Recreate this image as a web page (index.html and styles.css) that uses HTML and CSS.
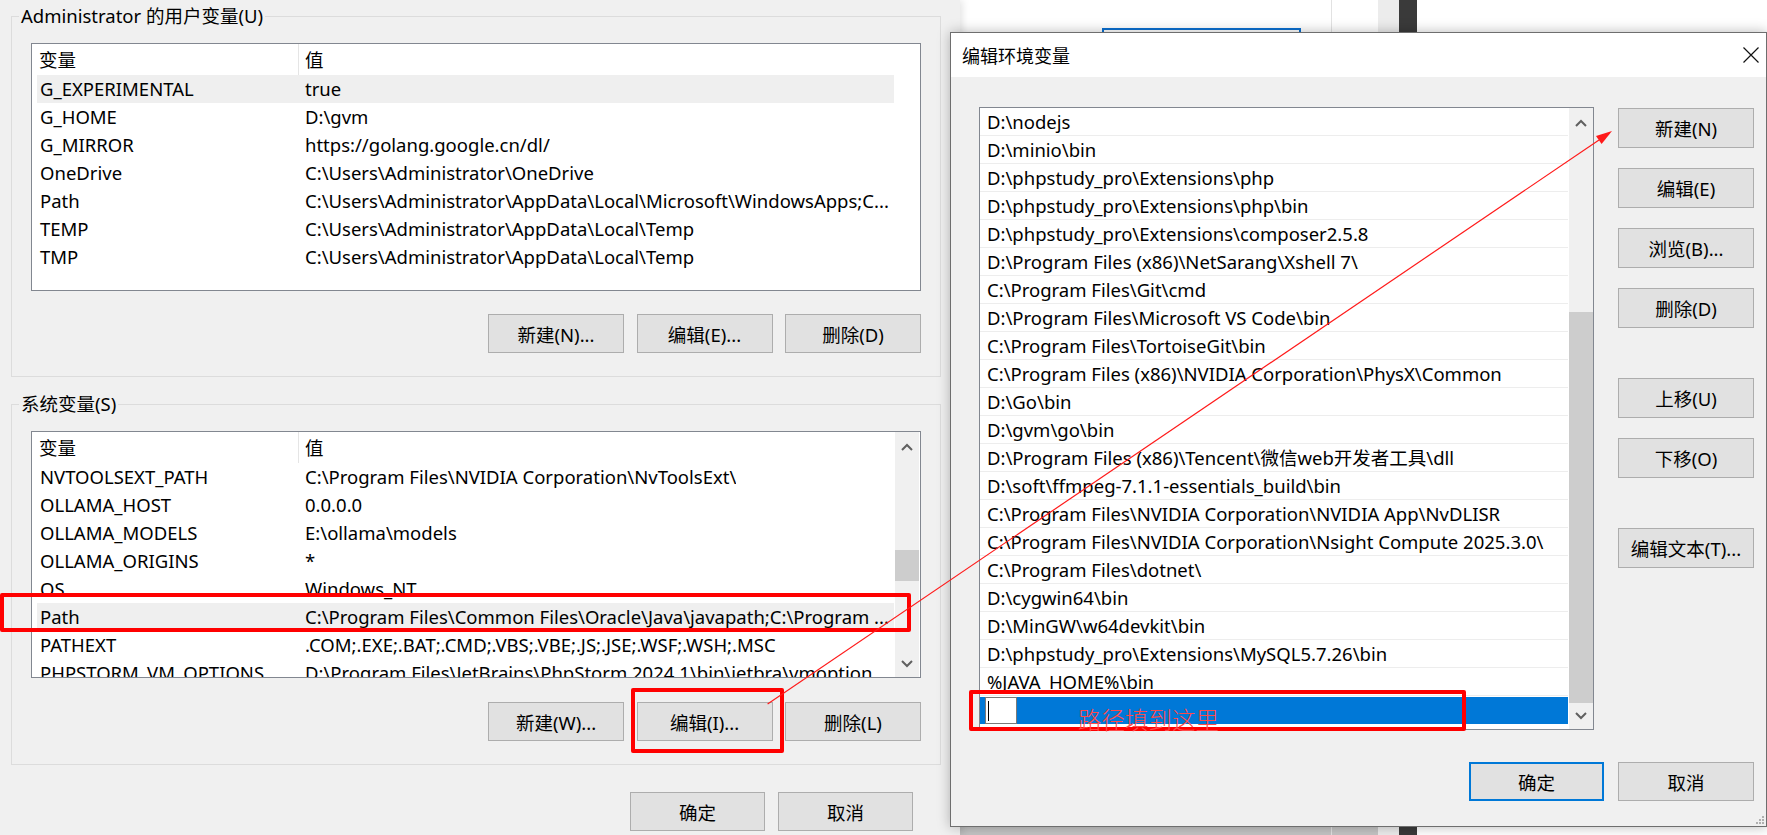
FILE: index.html
```html
<!DOCTYPE html>
<html lang="zh-CN">
<head>
    <meta charset="UTF-8">
    <title>环境变量</title>
    <link rel="stylesheet" href="styles.css">
</head>
<body>
<div class="desktop">

    <!-- 环境变量 主窗口 -->
    <div class="sysenv">
        <fieldset class="group">
            <legend>Administrator 的用户变量(U)</legend>
            <div class="listview user-list">
                <div class="lv-main">
                    <div class="lv-head"><span class="c1">变量</span><span class="c2">值</span></div>
                    <div class="lv-row hot"><span class="c1">G_EXPERIMENTAL</span><span class="c2">true</span></div>
                    <div class="lv-row"><span class="c1">G_HOME</span><span class="c2">D:\gvm</span></div>
                    <div class="lv-row"><span class="c1">G_MIRROR</span><span class="c2">https://golang.google.cn/dl/</span></div>
                    <div class="lv-row"><span class="c1">OneDrive</span><span class="c2">C:\Users\Administrator\OneDrive</span></div>
                    <div class="lv-row"><span class="c1">Path</span><span class="c2">C:\Users\Administrator\AppData\Local\Microsoft\WindowsApps;C...</span></div>
                    <div class="lv-row"><span class="c1">TEMP</span><span class="c2">C:\Users\Administrator\AppData\Local\Temp</span></div>
                    <div class="lv-row"><span class="c1">TMP</span><span class="c2">C:\Users\Administrator\AppData\Local\Temp</span></div>
                </div>
            </div>
            <div class="btn-row">
                <div class="btn">新建(N)...</div>
                <div class="btn">编辑(E)...</div>
                <div class="btn">删除(D)</div>
            </div>
        </fieldset>

        <fieldset class="group sys-group">
            <legend>系统变量(S)</legend>
            <div class="listview sys-list">
                <div class="lv-main">
                    <div class="lv-head"><span class="c1">变量</span><span class="c2">值</span></div>
                    <div class="lv-row"><span class="c1">NVTOOLSEXT_PATH</span><span class="c2">C:\Program Files\NVIDIA Corporation\NvToolsExt\</span></div>
                    <div class="lv-row"><span class="c1">OLLAMA_HOST</span><span class="c2">0.0.0.0</span></div>
                    <div class="lv-row"><span class="c1">OLLAMA_MODELS</span><span class="c2">E:\ollama\models</span></div>
                    <div class="lv-row"><span class="c1">OLLAMA_ORIGINS</span><span class="c2">*</span></div>
                    <div class="lv-row"><span class="c1">OS</span><span class="c2">Windows_NT</span></div>
                    <div class="lv-row hot"><span class="c1">Path</span><span class="c2">C:\Program Files\Common Files\Oracle\Java\javapath;C:\Program ...</span></div>
                    <div class="lv-row"><span class="c1">PATHEXT</span><span class="c2">.COM;.EXE;.BAT;.CMD;.VBS;.VBE;.JS;.JSE;.WSF;.WSH;.MSC</span></div>
                    <div class="lv-row"><span class="c1">PHPSTORM_VM_OPTIONS</span><span class="c2">D:\Program Files\JetBrains\PhpStorm 2024.1\bin\jetbra\vmoption</span></div>
                </div>
                <div class="vscroll small">
                    <div class="sb-up"><svg width="12" height="8" viewBox="0 0 12 8"><path d="M1 7 L6 2 L11 7" fill="none" stroke="#606060" stroke-width="2"/></svg></div>
                    <div class="sb-gap"></div>
                    <div class="sb-thumb"></div>
                    <div class="sb-track"></div>
                    <div class="sb-down"><svg width="12" height="8" viewBox="0 0 12 8"><path d="M1 1 L6 6 L11 1" fill="none" stroke="#606060" stroke-width="2"/></svg></div>
                </div>
            </div>
            <div class="btn-row">
                <div class="btn">新建(W)...</div>
                <div class="btn">编辑(I)...</div>
                <div class="btn">删除(L)</div>
            </div>
        </fieldset>

        <div class="btn-row main-foot">
            <div class="btn">确定</div>
            <div class="btn">取消</div>
        </div>
    </div>

    <!-- 后面的窗口 -->
    <div class="backdrop">
        <div class="bd-a"><div class="blue-box"></div><div class="bd-bottom"></div></div>
        <div class="bd-line"></div>
        <div class="bd-b"><div class="bd-bottom"></div></div>
        <div class="bd-c"></div>
        <div class="bd-d"></div>
        <div class="bd-e"></div>
    </div>

    <!-- 编辑环境变量 对话框 -->
    <div class="dialog">
        <div class="dlg-title">
            <span>编辑环境变量</span>
            <svg class="close" width="16" height="16" viewBox="0 0 16 16"><path d="M0.5 0.5 L15.5 15.5 M15.5 0.5 L0.5 15.5" stroke="#111" stroke-width="1.2"/></svg>
        </div>
        <div class="dlg-body">
            <div class="dlg-main">
                <div class="dlg-list">
                    <div class="dl-rows">
                        <div class="dl-row">D:\nodejs</div>
                        <div class="dl-row">D:\minio\bin</div>
                        <div class="dl-row">D:\phpstudy_pro\Extensions\php</div>
                        <div class="dl-row">D:\phpstudy_pro\Extensions\php\bin</div>
                        <div class="dl-row">D:\phpstudy_pro\Extensions\composer2.5.8</div>
                        <div class="dl-row">D:\Program Files (x86)\NetSarang\Xshell 7\</div>
                        <div class="dl-row">C:\Program Files\Git\cmd</div>
                        <div class="dl-row">D:\Program Files\Microsoft VS Code\bin</div>
                        <div class="dl-row">C:\Program Files\TortoiseGit\bin</div>
                        <div class="dl-row">C:\Program Files (x86)\NVIDIA Corporation\PhysX\Common</div>
                        <div class="dl-row">D:\Go\bin</div>
                        <div class="dl-row">D:\gvm\go\bin</div>
                        <div class="dl-row">D:\Program Files (x86)\Tencent\微信web开发者工具\dll</div>
                        <div class="dl-row">D:\soft\ffmpeg-7.1.1-essentials_build\bin</div>
                        <div class="dl-row">C:\Program Files\NVIDIA Corporation\NVIDIA App\NvDLISR</div>
                        <div class="dl-row">C:\Program Files\NVIDIA Corporation\Nsight Compute 2025.3.0\</div>
                        <div class="dl-row">C:\Program Files\dotnet\</div>
                        <div class="dl-row">D:\cygwin64\bin</div>
                        <div class="dl-row">D:\MinGW\w64devkit\bin</div>
                        <div class="dl-row">D:\phpstudy_pro\Extensions\MySQL5.7.26\bin</div>
                        <div class="dl-row">%JAVA_HOME%\bin</div>
                        <div class="dl-row editing"><div class="edit-box"><span class="caret"></span></div></div>
                    </div>
                    <div class="vscroll">
                        <div class="sb-up"><svg width="12" height="8" viewBox="0 0 12 8"><path d="M1 7 L6 2 L11 7" fill="none" stroke="#606060" stroke-width="2"/></svg></div>
                        <div class="sb-track"></div>
                        <div class="sb-thumb big"></div>
                        <div class="sb-down short"><svg width="12" height="8" viewBox="0 0 12 8"><path d="M1 1 L6 6 L11 1" fill="none" stroke="#606060" stroke-width="2"/></svg></div>
                    </div>
                </div>
                <div class="dlg-btns">
                    <div class="btn">新建(N)</div>
                    <div class="btn">编辑(E)</div>
                    <div class="btn">浏览(B)...</div>
                    <div class="btn">删除(D)</div>
                    <div class="btn spaced">上移(U)</div>
                    <div class="btn">下移(O)</div>
                    <div class="btn spaced">编辑文本(T)...</div>
                </div>
            </div>
            <div class="dlg-foot">
                <div class="btn default">确定</div>
                <div class="btn">取消</div>
            </div>
        </div>
        <svg class="grip" width="8" height="8" viewBox="0 0 8 8"><rect x="6" y="0" width="2" height="2" fill="#b0b0b0"/><rect x="3" y="3" width="2" height="2" fill="#b0b0b0"/><rect x="6" y="3" width="2" height="2" fill="#b0b0b0"/><rect x="0" y="6" width="2" height="2" fill="#b0b0b0"/><rect x="3" y="6" width="2" height="2" fill="#b0b0b0"/><rect x="6" y="6" width="2" height="2" fill="#b0b0b0"/></svg>
    </div>

    <!-- 红色标注 -->
    <div class="mark mark-row"></div>
    <div class="mark mark-btn"></div>
    <div class="mark mark-edit"></div>
    <div class="mark-text">路径填到这里</div>
    <svg class="arrow" width="1767" height="835" viewBox="0 0 1767 835">
        <line x1="767.6" y1="704" x2="1599" y2="140" stroke="#ff1a1a" stroke-width="1.2"/>
        <polygon points="1612,131 1601.6,144.1 1596,135.9" fill="#ff1a1a"/>
    </svg>
</div>
</body>
</html>
```

FILE: styles.css
```css
body {
    margin: 0;
    width: 1767px;
    height: 835px;
    overflow: hidden;
    background: #fff;
    font-family: "Noto Sans", "Noto Sans CJK SC", sans-serif;
    font-size: 18.5px;
    color: #000;
}

.desktop {
    position: relative;
    display: flex;
    width: 1767px;
    height: 835px;
}

/* 主窗口 */
.sysenv {
    width: 960px;
    flex: none;
    box-sizing: border-box;
    background: #f0f0f0;
    padding: 5px 0 0 11px;
    position: relative;
    z-index: 1;
    box-shadow: 2px 0 8px rgba(0, 0, 0, 0.12);
}

.group {
    width: 930px;
    box-sizing: border-box;
    margin: 0;
    padding: 0 19px 23px 7px;
    border: 1px solid #dcdcdc;
    min-width: 0;
}

.group legend {
    padding: 0 2px;
    line-height: 22px;
    height: 22px;
}

.sys-group {
    margin-top: 16px;
}

.listview {
    display: flex;
    margin: 16px 0 0 12px;
    box-sizing: border-box;
    border: 1px solid #828790;
    background: #fff;
    overflow: hidden;
}

.user-list {
    height: 248px;
}

.sys-list {
    height: 247px;
}

.lv-main {
    width: 862px;
    flex: none;
    overflow: hidden;
}

.lv-head {
    display: flex;
    height: 31px;
    line-height: 31px;
}

.lv-head .c1 {
    width: 267px;
    padding-left: 7px;
    box-sizing: border-box;
    border-right: 1px solid #e5e5e5;
}

.lv-head .c2 {
    padding-left: 6px;
}

.lv-row {
    display: flex;
    height: 28px;
    line-height: 28px;
    margin-left: 5px;
    white-space: nowrap;
}

.lv-row .c1 {
    width: 262px;
    flex: none;
    padding-left: 3px;
    box-sizing: border-box;
    overflow: hidden;
}

.lv-row .c2 {
    padding-left: 6px;
    overflow: hidden;
}

.lv-row.hot {
    background: #efefef;
}

/* 滚动条 */
.vscroll {
    width: 24px;
    flex: none;
    margin-left: 1px;
    background: #f0f0f0;
    display: flex;
    flex-direction: column;
}

.sb-up,
.sb-down {
    height: 30px;
    flex: none;
    display: flex;
    align-items: center;
    justify-content: center;
}

.sb-down {
    height: 27px;
}

.sb-down.short {
    height: 26px;
}

.sb-gap {
    height: 88px;
    flex: none;
}

.sb-track {
    flex: 1;
}

.sb-thumb {
    height: 31px;
    flex: none;
    background: #cdcdcd;
}

.sb-thumb.big {
    height: 391px;
}

/* 按钮 */
.btn-row {
    display: flex;
    justify-content: flex-end;
    gap: 12.5px;
    margin-top: 23px;
}

.sys-group .btn-row {
    margin-top: 24px;
}

.btn {
    width: 136px;
    height: 39px;
    box-sizing: border-box;
    background: #e1e1e1;
    border: 1px solid #adadad;
    display: flex;
    align-items: center;
    justify-content: center;
    white-space: nowrap;
}

.main-foot {
    margin-top: 27px;
    padding-right: 47px;
    gap: 13px;
}

.main-foot .btn {
    width: 135px;
}

/* 后面的窗口 */
.backdrop {
    flex: 1;
    display: flex;
}

.bd-a {
    width: 371px;
    display: flex;
    flex-direction: column;
    justify-content: space-between;
}

.blue-box {
    margin: 28px 0 0 142px;
    width: 199px;
    height: 40px;
    box-sizing: border-box;
    border: 2px solid #0a6fd0;
}

.bd-bottom {
    height: 8px;
    background: #c4c4c4;
}

.bd-line {
    width: 1px;
    background: #e2e2e2;
}

.bd-b {
    width: 46px;
    display: flex;
    flex-direction: column;
    justify-content: flex-end;
}

.bd-c {
    width: 21px;
    background: #ececec;
}

.bd-d {
    width: 18px;
    background: #3a3a3a;
}

.bd-e {
    flex: 1;
}

/* 对话框 */
.dialog {
    position: absolute;
    left: 950px;
    top: 32px;
    width: 817px;
    height: 795px;
    box-sizing: border-box;
    border: 1px solid #6e6e6e;
    background: #f0f0f0;
    box-shadow: 0 0 12px rgba(0, 0, 0, 0.28);
    display: flex;
    flex-direction: column;
    z-index: 2;
}

.dlg-title {
    height: 44px;
    flex: none;
    background: #fff;
    display: flex;
    align-items: center;
    justify-content: space-between;
    padding: 0 7px 0 11px;
    font-size: 18px;
}

.dlg-body {
    padding: 30px 12px 0 28px;
}

.dlg-main {
    display: flex;
    gap: 24px;
}

.dlg-list {
    width: 615px;
    height: 623px;
    box-sizing: border-box;
    border: 1px solid #828790;
    background: #fff;
    display: flex;
    overflow: hidden;
}

.dl-rows {
    width: 588px;
    flex: none;
}

.dl-row {
    height: 28px;
    box-sizing: border-box;
    line-height: 27px;
    padding-left: 7px;
    border-bottom: 1px solid #ededed;
    white-space: nowrap;
    overflow: hidden;
}

.dl-row.editing {
    background: #0078d7;
    border-bottom: none;
    padding-left: 5px;
    display: flex;
    align-items: center;
    margin-top: 1px;
    height: 27px;
}

.edit-box {
    width: 32px;
    height: 27px;
    box-sizing: border-box;
    background: #fff;
    border: 1px solid #7a7a7a;
    display: flex;
    align-items: center;
}

.caret {
    width: 1px;
    height: 20px;
    margin-left: 2px;
    background: #000;
}

.dlg-btns {
    display: flex;
    flex-direction: column;
    gap: 20px;
    padding-top: 1px;
}

.dlg-btns .btn {
    height: 40px;
}

.dlg-btns .spaced {
    margin-top: 30px;
}

.dlg-foot {
    margin-top: 32px;
    display: flex;
    justify-content: flex-end;
    gap: 14px;
}

.dlg-foot .btn.default {
    width: 135px;
    border: 2px solid #0078d7;
}

.grip {
    position: absolute;
    right: 2px;
    bottom: 2px;
}

/* 红色标注 */
.mark {
    position: absolute;
    box-sizing: border-box;
    border: 4px solid #ff0000;
    border-radius: 2px;
    z-index: 3;
}

.mark-row {
    left: 0;
    top: 593px;
    width: 911px;
    height: 39px;
}

.mark-btn {
    left: 631px;
    top: 688px;
    width: 153px;
    height: 65px;
}

.mark-edit {
    left: 969px;
    top: 690px;
    width: 497px;
    height: 41px;
}

.mark-text {
    position: absolute;
    left: 1078px;
    top: 706px;
    z-index: 3;
    font-family: "Noto Sans CJK SC", sans-serif;
    font-weight: 300;
    font-size: 23.5px;
    line-height: 26px;
    color: #ff4a4a;
}

.arrow {
    position: absolute;
    left: 0;
    top: 0;
    z-index: 4;
    pointer-events: none;
}
```
